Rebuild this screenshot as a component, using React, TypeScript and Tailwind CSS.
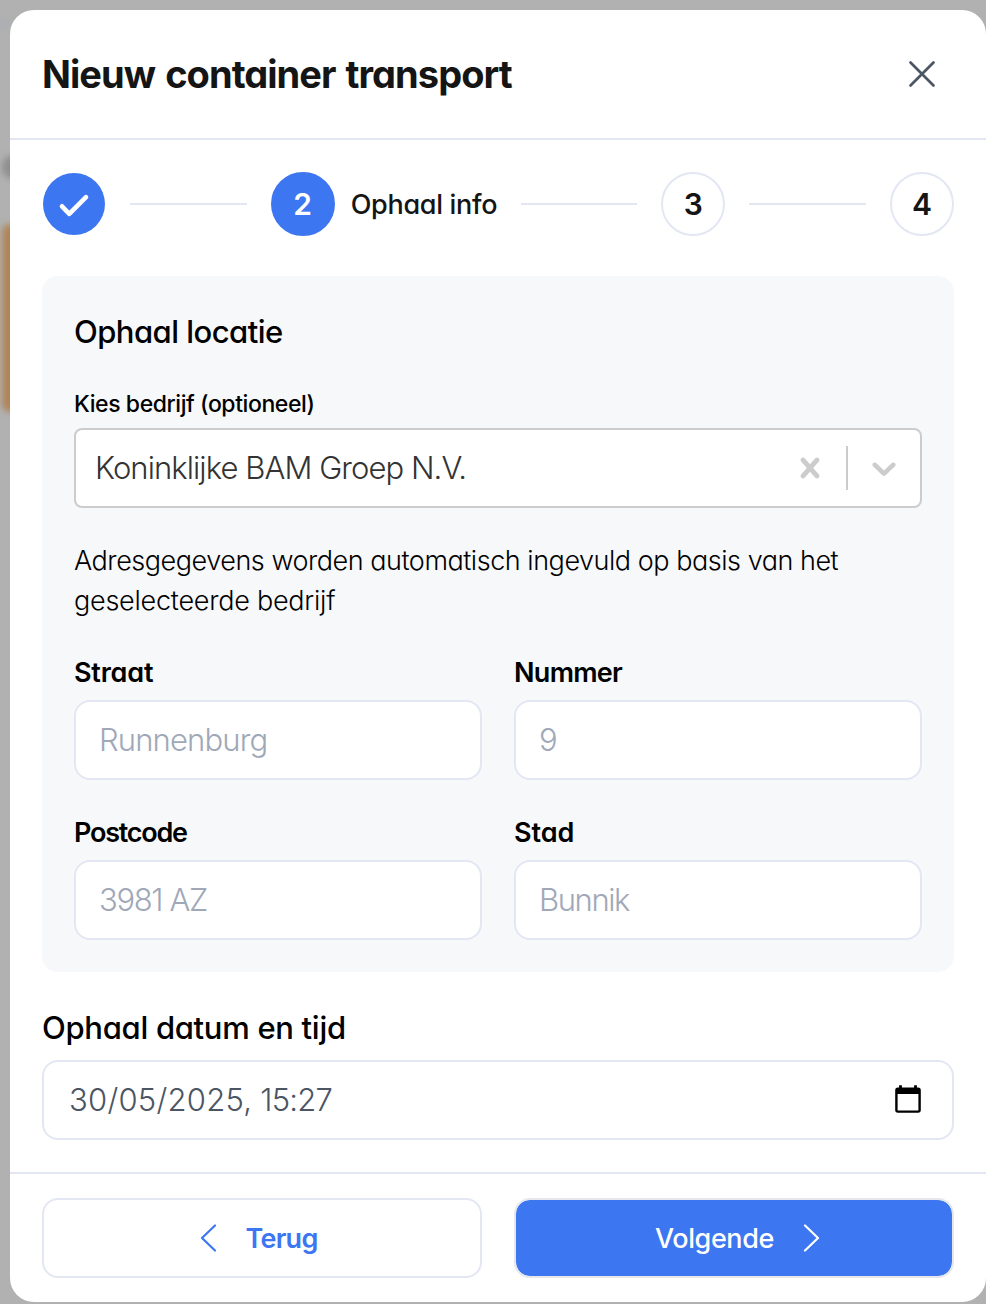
import type { ReactNode } from "react";

type FieldProps = {
  label: string;
  labelClass: string;
  placeholder: string;
  inputClass: string;
};

function Field({ label, labelClass, placeholder, inputClass }: FieldProps) {
  return (
    <label className="flex flex-col">
      <span className={`h-10 whitespace-nowrap pt-px text-[27px] leading-10 font-semibold text-black ${labelClass}`}>{label}</span>
      <input
        placeholder={placeholder}
        className={`mt-2 h-20 w-full rounded-2xl border-2 border-[#e3e7f3] bg-white pr-6 pb-0.5 pl-[23px] text-[31px] font-light text-gray-600 outline-none placeholder:text-[#a0a8b8] ${inputClass}`}
      />
    </label>
  );
}

function StepCircle({ children, active }: { children: ReactNode; active?: boolean }) {
  return (
    <div
      className={`flex size-16 shrink-0 items-center justify-center rounded-full border-2 text-[30px] font-semibold ${
        active ? "border-[#3d76f1] bg-[#3d76f1] text-white" : "border-[#e3e7f3] bg-white text-[#151515]"
      }`}
    >
      {children}
    </div>
  );
}

function StepLine() {
  return <div className="h-0.5 flex-1 bg-[#e3e7f3]" />;
}

export default function App() {
  return (
    <div className="relative h-[1304px] w-full overflow-hidden bg-[#b1b1b1] pt-2.5 pl-2.5 font-['Inter','Liberation_Sans',sans-serif] [font-feature-settings:'cv11']">
      <div className="absolute top-[18px] left-0 h-3 w-2.5 bg-[#aeafb3] blur-[2px]" />
      <div className="absolute top-[155px] left-0.5 size-6 rounded-full bg-[#8e8e8e] blur-[3px]" />
      <div className="absolute top-[224px] left-0.5 h-[188px] w-10 rounded-lg bg-[#af8558] blur-[3px]" />
      <div className="relative flex h-[1292px] flex-col rounded-3xl bg-white">
        <header className="flex h-[130px] items-center justify-between border-b-2 border-[#e3e7f3] pr-12 pl-8">
          <h1 className="whitespace-nowrap text-[38px] font-[650] tracking-[-0.95px] text-[#151515] [word-spacing:2px]">Nieuw container transport</h1>
          <button aria-label="Sluiten" className="flex size-8 items-center justify-center">
            <svg viewBox="0 0 32 32" className="size-8" fill="none" stroke="#4b5563" strokeWidth="2.7" strokeLinecap="round">
              <path d="M4.5 4.5 27.5 27.5M27.5 4.5 4.5 27.5" />
            </svg>
          </button>
        </header>

        <main className="flex flex-1 flex-col px-8 pt-8">
          <nav className="flex h-16 items-center gap-6">
            <div className="flex size-16 shrink-0 items-center justify-center">
              <div className="flex size-[62px] items-center justify-center rounded-full bg-[#3d76f1]">
                <svg viewBox="0 0 32 32" className="size-8" fill="none" stroke="#fff" strokeWidth="4.6" strokeLinecap="round" strokeLinejoin="round">
                  <path d="M4 18.5 11.3 26 28 9.3" transform="translate(0 -0.2)" />
                </svg>
              </div>
            </div>
            <StepLine />
            <div className="flex w-[226px] shrink-0 items-center gap-4">
              <StepCircle active>2</StepCircle>
              <span className="whitespace-nowrap pt-0.5 text-[27px] font-medium tracking-[-0.3px] text-[#151515]">Ophaal info</span>
            </div>
            <StepLine />
            <StepCircle>3</StepCircle>
            <StepLine />
            <StepCircle>4</StepCircle>
          </nav>

          <section className="mt-10 h-[696px] rounded-2xl bg-[#f7f8fa] px-8 pt-8">
            <h2 className="h-12 whitespace-nowrap text-[31px] leading-[48px] font-medium tracking-[-0.54px] text-black">Ophaal locatie</h2>
            <div className="mt-8 h-8 whitespace-nowrap text-[23px] leading-8 font-medium tracking-[-0.42px] text-black">
              Kies bedrijf (optioneel)
            </div>
            <div className="mt-2 flex h-20 items-center rounded-lg border-2 border-[#cccccc] bg-white pl-[19px]">
              <span className="flex-1 whitespace-nowrap text-[31px] font-light tracking-[-0.93px] text-[#333333]">Koninklijke BAM Groep N.V.</span>
              <svg viewBox="0 0 20 20" className="mr-4 size-10" fill="#cccccc">
                <path d="M14.348 14.849c-0.469 0.469-1.229 0.469-1.697 0l-2.651-3.030-2.651 3.029c-0.469 0.469-1.229 0.469-1.697 0-0.469-0.469-0.469-1.229 0-1.697l2.758-3.15-2.759-3.152c-0.469-0.469-0.469-1.228 0-1.697s1.228-0.469 1.697 0l2.652 3.031 2.651-3.031c0.469-0.469 1.228-0.469 1.697 0s0.469 1.229 0 1.697l-2.758 3.152 2.758 3.15c0.469 0.469 0.469 1.229 0 1.698z" />
              </svg>
              <div className="h-11 w-0.5 bg-[#cccccc]" />
              <svg viewBox="0 0 20 20" className="mx-4 size-10" fill="#cccccc">
                <path d="M4.516 7.548c0.436-0.446 1.043-0.481 1.576 0l3.908 3.747 3.908-3.747c0.533-0.481 1.141-0.446 1.574 0 0.436 0.445 0.408 1.197 0 1.615-0.406 0.418-4.695 4.502-4.695 4.502-0.217 0.223-0.502 0.335-0.787 0.335s-0.57-0.112-0.789-0.335c0 0-4.287-4.084-4.695-4.502s-0.436-1.17 0-1.615z" />
              </svg>
            </div>
            <p className="mt-[33px] text-[27px] leading-10 font-light text-black">
              <span className="block whitespace-nowrap tracking-[-0.47px]">Adresgegevens worden automatisch ingevuld op basis van het</span>
              <span className="block whitespace-nowrap tracking-[-0.25px]">geselecteerde bedrijf</span>
            </p>
            <div className="mt-[31px] grid grid-cols-2 gap-x-8 gap-y-8">
              <Field label="Straat" labelClass="tracking-[-0.2px]" placeholder="Runnenburg" inputClass="tracking-[-0.85px]" />
              <Field label="Nummer" labelClass="tracking-[-0.7px]" placeholder="9" inputClass="tracking-[-0.62px]" />
              <Field label="Postcode" labelClass="tracking-[-1.25px]" placeholder="3981 AZ" inputClass="tracking-[-1.35px]" />
              <Field label="Stad" labelClass="tracking-[-0.1px]" placeholder="Bunnik" inputClass="tracking-[-1.4px]" />
            </div>
          </section>

          <div className="mt-8 h-12 whitespace-nowrap text-[31px] leading-[48px] font-medium tracking-[-0.3px] text-black">Ophaal datum en tijd</div>
          <div className="mt-2 flex h-20 items-center justify-between rounded-2xl border-2 border-[#e3e7f3] bg-white pr-7 pl-[25px]">
            <span className="whitespace-nowrap text-[31px] font-light text-[#4b5563]">
              <span className="tracking-[0.25px]">30/05/2025,</span>
              <span className="tracking-[-0.8px]"> 15:27</span>
            </span>
            <svg viewBox="0 0 32 32" className="size-8" fill="none">
              <path d="M8.5 1.2v4M23.5 1.2v4" stroke="#000" strokeWidth="2.8" />
              <rect x="4.4" y="4.8" width="23.2" height="22.8" rx="1.5" stroke="#000" strokeWidth="2.4" />
              <path d="M4 4h24v6H4z" fill="#000" />
            </svg>
          </div>
        </main>

        <footer className="flex h-[130px] items-center gap-8 border-t-2 border-[#e3e7f3] px-8">
          <button className="flex h-20 flex-1 items-center justify-center gap-[23px] rounded-2xl border-2 border-[#e3e7f3] bg-white pr-3 text-[#3d76f1]">
            <svg viewBox="0 0 28 28" className="size-7" fill="none" stroke="currentColor" strokeWidth="2.2" strokeLinecap="round" strokeLinejoin="round">
              <path d="M21 1.5 8 14 21 26.5" />
            </svg>
            <span className="whitespace-nowrap pt-0.5 text-[27px] font-semibold tracking-[-0.75px]">Terug</span>
          </button>
          <button className="flex h-20 flex-1 items-center justify-center gap-[23px] rounded-2xl border-2 border-[#e5e7eb] bg-[#3d76f1] bg-clip-padding pl-3 text-white">
            <span className="whitespace-nowrap pt-0.5 text-[27px] font-medium tracking-[-0.42px]">Volgende</span>
            <svg viewBox="0 0 28 28" className="size-7" fill="none" stroke="currentColor" strokeWidth="2.2" strokeLinecap="round" strokeLinejoin="round">
              <path d="M8 1.5 21 14 8 26.5" />
            </svg>
          </button>
        </footer>
      </div>
    </div>
  );
}
